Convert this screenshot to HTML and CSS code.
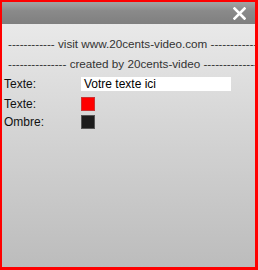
FILE: index.html
```html
<!DOCTYPE html>
<html>
<head>
<meta charset="utf-8">
<link rel="stylesheet" href="styles.css">
</head>
<body>
<div class="panel">
  <div class="header">
    <svg class="close" width="13" height="13" viewBox="0 0 13 13"><path d="M1.5 1.5 L11.5 11.5 M11.5 1.5 L1.5 11.5" stroke="#fff" stroke-width="2.6" stroke-linecap="square"/></svg>
  </div>
  <div class="content">
    <div class="banner">------------ visit www.20cents-video.com ------------</div>
    <div class="banner">--------------- created by 20cents-video ---------------</div>
    <div class="row r1">
      <span class="label">Texte:</span>
      <span class="input">Votre texte ici</span>
    </div>
    <div class="row r2">
      <span class="label">Texte:</span>
      <span class="swatch red"></span>
    </div>
    <div class="row r3">
      <span class="label">Ombre:</span>
      <span class="swatch black"></span>
    </div>
  </div>
</div>
</body>
</html>
```

FILE: styles.css
```css
html, body {
  margin: 0;
  padding: 0;
  width: 258px;
  height: 270px;
  overflow: hidden;
}
.panel {
  box-sizing: border-box;
  width: 258px;
  height: 270px;
  border: 2px solid #f00;
  border-right-width: 3px;
  border-bottom-width: 3px;
  display: flex;
  flex-direction: column;
  font-family: "Liberation Sans", Arial, sans-serif;
  font-size: 12px;
  color: #222;
}
.header {
  height: 22px;
  flex: none;
  background: linear-gradient(#a3a3a3, #8a8a8a 40%, #7f7f7f);
  display: flex;
  justify-content: flex-end;
  align-items: center;
  padding-right: 9px;
}
.close {
  display: block;
  margin-top: 1px;
}
.content {
  flex: 1;
  background: linear-gradient(#e9e9e9, #d6d6d6 40%, #bcbcbc);
  padding-top: 13px;
  overflow: hidden;
}
.banner {
  white-space: nowrap;
  overflow: hidden;
  color: #333;
  height: 20px;
  line-height: 14px;
  font-size: 11.7px;
  padding-left: 6px;
}
.row {
  display: flex;
  align-items: center;
  padding-left: 2px;
  height: 18px;
}
.r1 { margin-top: -2px; }
.r2 { margin-top: 2px; }
.label {
  width: 77px;
  color: #111;
}
.input {
  box-sizing: border-box;
  width: 150px;
  height: 14px;
  background: #fff;
  padding-left: 3px;
  line-height: 14px;
  color: #000;
}
.swatch {
  width: 14px;
  height: 14px;
  box-sizing: border-box;
  border: 1px solid #999;
  margin-left: 0;
}
.red { background: #f00; border-color: #c33; }
.black { background: #1c1c1c; border-color: #555; }
```
